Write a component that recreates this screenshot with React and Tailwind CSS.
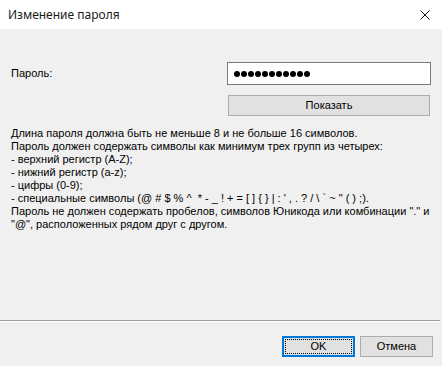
import React from 'react';

const rules = [
    'Длина пароля должна быть не меньше 8 и не больше 16 символов.',
    'Пароль должен содержать символы как минимум трех групп из четырех:',
    '- верхний регистр (A-Z);',
    '- нижний регистр (a-z);',
    '- цифры (0-9);',
    '- специальные символы (@ # $ % ^  * - _ ! + = [ ] { } | : \' , . ? / \\ ` ~ " ( ) ;).',
    'Пароль не должен содержать пробелов, символов Юникода или комбинации "." и',
    '"@", расположенных рядом друг с другом.',
];

const App = () => {
    return (
        <div className="w-[442px] h-[366px] bg-[#f0f0f0] flex flex-col text-black" style={{ fontFamily: '"Liberation Sans", Arial, sans-serif' }}>
            {/* Title bar */}
            <div className="h-[29px] bg-white flex items-center justify-between pl-[8px] pr-[7px] shrink-0">
                <span className="text-[12px] text-[#1a1a1a]" style={{ fontFamily: '"Noto Sans", "Open Sans", sans-serif' }}>
                    Изменение пароля
                </span>
                <svg width="10" height="10" viewBox="0 0 10 10" className="mr-[5px] mt-[1px]">
                    <path d="M0.5 0.5 L9.5 9.5 M9.5 0.5 L0.5 9.5" stroke="#111" strokeWidth="1" fill="none" />
                </svg>
            </div>

            {/* Body */}
            <div className="flex-1 flex flex-col pl-[11px] pr-[11px]">
                <div className="flex items-center justify-between mt-[33px]">
                    <span className="text-[11px]">Пароль:</span>
                    <div className="w-[204px] h-[23px] bg-white border border-[#7a7a7a] flex items-center gap-[1px] pl-[6px]">
                        {Array.from({ length: 11 }).map((_, i) => (
                            <span key={i} className="w-[6px] h-[6px] rounded-full bg-black" />
                        ))}
                    </div>
                </div>
                <div className="flex justify-end mt-[10px] pr-[1px]">
                    <button className="w-[202px] h-[21px] bg-[#e1e1e1] border border-[#adadad] text-[11px] flex items-center justify-center">
                        Показать
                    </button>
                </div>
                <div className="mt-[11px] text-[11px] leading-[13px]">
                    {rules.map((line, i) => (
                        <div key={i} className="whitespace-pre">{line}</div>
                    ))}
                </div>
            </div>

            {/* Footer */}
            <div className="shrink-0">
                <div className="w-[440px] h-[1px] bg-[#a0a0a0]" />
                <div className="w-[440px] h-[1px] bg-white" />
                <div className="flex justify-end gap-[5px] pr-[9px] pt-[14px] pb-[9px]">
                    <button className="w-[73px] h-[21px] border-2 border-[#0078d7] bg-[#e1e1e1] p-[1px] text-[11px]">
                        <span className="w-full h-full flex items-center justify-center border border-dotted border-black">OK</span>
                    </button>
                    <button className="w-[73px] h-[21px] border border-[#adadad] bg-[#e1e1e1] text-[11px] flex items-center justify-center">
                        Отмена
                    </button>
                </div>
            </div>
        </div>
    );
};

export default App;
